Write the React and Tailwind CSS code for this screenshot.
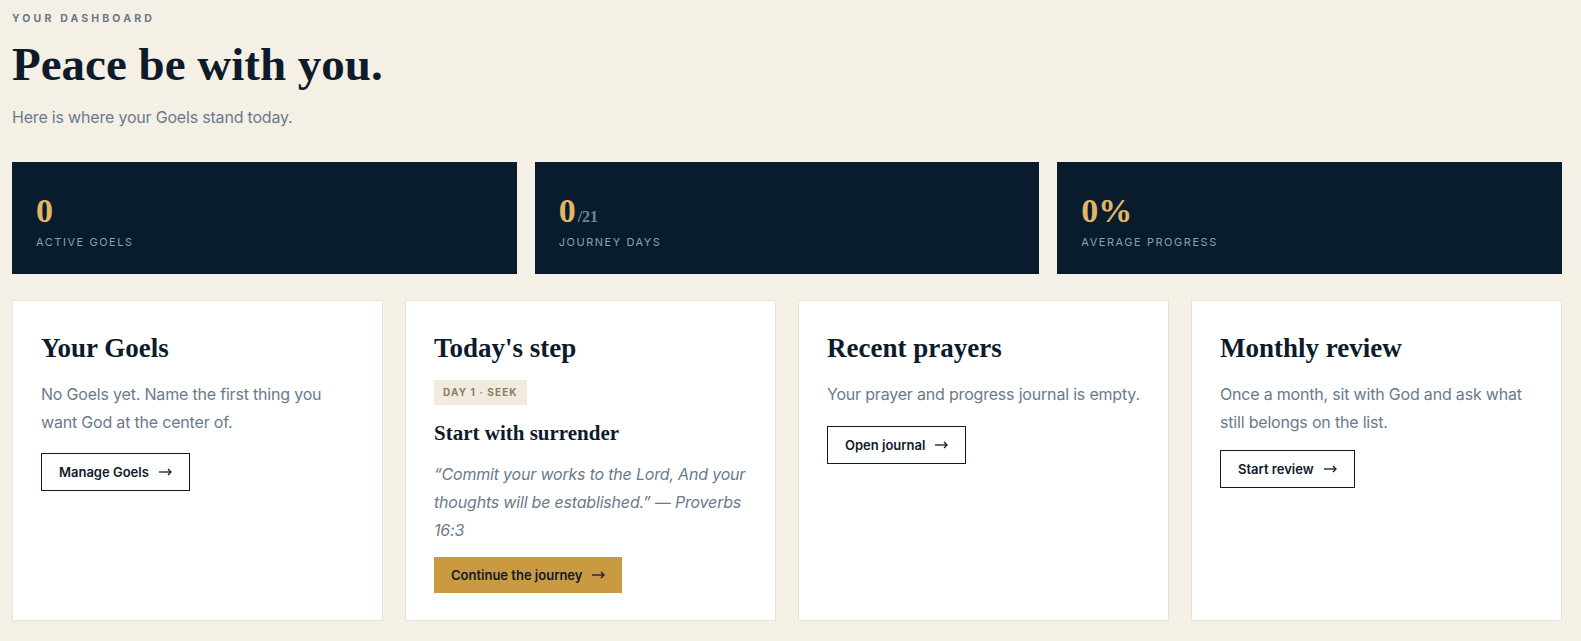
import React from "react";

const stats = [
  { value: "0", label: "Active Goels" },
  { value: "0", suffix: "/21", label: "Journey Days" },
  { value: "0%", label: "Average Progress" },
];

function Arrow() {
  return (
    <svg width="13" height="8" viewBox="0 0 13 8" fill="none" stroke="currentColor" strokeWidth="1.3">
      <path d="M0 4h12" />
      <path d="M9 1l3 3-3 3" />
    </svg>
  );
}

function StatCard({ value, suffix, label }) {
  return (
    <div className="bg-[#081c2e] px-6 pt-[32px] pb-6">
      <div className="h-[34px] font-['Liberation_Serif',serif] font-bold text-[34px] leading-[34px] text-[#e2b665]">
        {value}
        {suffix && (
          <span className="ml-[2px] text-[16px] leading-none text-[#6f8499]">{suffix}</span>
        )}
      </div>
      <div className="mt-[6px] text-[11px] leading-4 uppercase tracking-[0.14em] text-[#8aa0b5]">
        {label}
      </div>
    </div>
  );
}

function OutlineButton({ children, className = "" }) {
  return (
    <button
      className={`flex items-center gap-[10px] border border-[#0d1b2a] px-[17px] py-2 text-[13px] leading-5 font-semibold text-[#0d1b2a] ${className}`}
    >
      {children}
      <Arrow />
    </button>
  );
}

function Card({ title, children }) {
  return (
    <div className="flex flex-col items-start border border-[#e9e2d5] bg-white px-7 pt-[31px] pb-[27px]">
      <h2 className="font-['Liberation_Serif',serif] text-[27px] leading-[1.2] font-bold text-[#0d1b2a]">
        {title}
      </h2>
      {children}
    </div>
  );
}

export default function App() {
  return (
    <div className="min-h-screen bg-[#f5f0e6] pl-3 pr-[19px] pt-[11px] pb-5 font-['Inter',sans-serif]">
      {/* header */}
      <div className="text-[10.5px] leading-4 font-bold uppercase tracking-[0.3em] text-[#6b7785]">
        Your dashboard
      </div>
      <h1 className="mt-3 font-['Liberation_Serif',serif] text-[47px] leading-[1.1] font-bold text-[#0d1b2a]">
        Peace be with you.
      </h1>
      <p className="mt-[14px] text-[16px] leading-6 tracking-[-0.012em] text-[#6b7a8a]">
        Here is where your Goels stand today.
      </p>

      {/* stats */}
      <div className="mt-[33px] grid grid-cols-3 gap-[18px]">
        {stats.map((s) => (
          <StatCard key={s.label} {...s} />
        ))}
      </div>

      {/* cards */}
      <div className="mt-[26px] grid grid-cols-4 gap-[22px]">
        <Card title="Your Goels">
          <p className="mt-4 text-[16px] leading-7 tracking-[-0.012em] text-[#6b7a8a]">
            No Goels yet. Name the first thing you want God at the center of.
          </p>
          <OutlineButton className="mt-[17px]">Manage Goels</OutlineButton>
        </Card>

        <Card title="Today's step">
          <span className="mt-4 bg-[#f1eadf] px-[9px] py-[5px] text-[10px] leading-[15px] font-bold uppercase tracking-[0.11em] text-[#8b7d63]">
            Day 1 · Seek
          </span>
          <h3 className="mt-[15px] font-['Liberation_Serif',serif] text-[21px] leading-[1.3] font-bold text-[#0d1b2a]">
            Start with surrender
          </h3>
          <p className="mt-[13px] text-[16px] leading-7 italic tracking-[-0.012em] text-[#6b7a8a]">
            “Commit your works to the Lord, And your thoughts will be established.” — Proverbs 16:3
          </p>
          <button className="mt-[13px] flex items-center gap-[10px] bg-[#c99a42] px-[17px] py-2 text-[13px] leading-5 font-semibold text-[#0d1b2a]">
            Continue the journey
            <Arrow />
          </button>
        </Card>

        <Card title="Recent prayers">
          <p className="mt-4 text-[16px] leading-7 tracking-[-0.012em] text-[#6b7a8a]">
            Your prayer and progress journal is empty.
          </p>
          <OutlineButton className="mt-[18px]">Open journal</OutlineButton>
        </Card>

        <Card title="Monthly review">
          <p className="mt-4 text-[16px] leading-7 tracking-[-0.012em] text-[#6b7a8a]">
            Once a month, sit with God and ask what still belongs on the list.
          </p>
          <OutlineButton className="mt-[14px]">Start review</OutlineButton>
        </Card>
      </div>
    </div>
  );
}
